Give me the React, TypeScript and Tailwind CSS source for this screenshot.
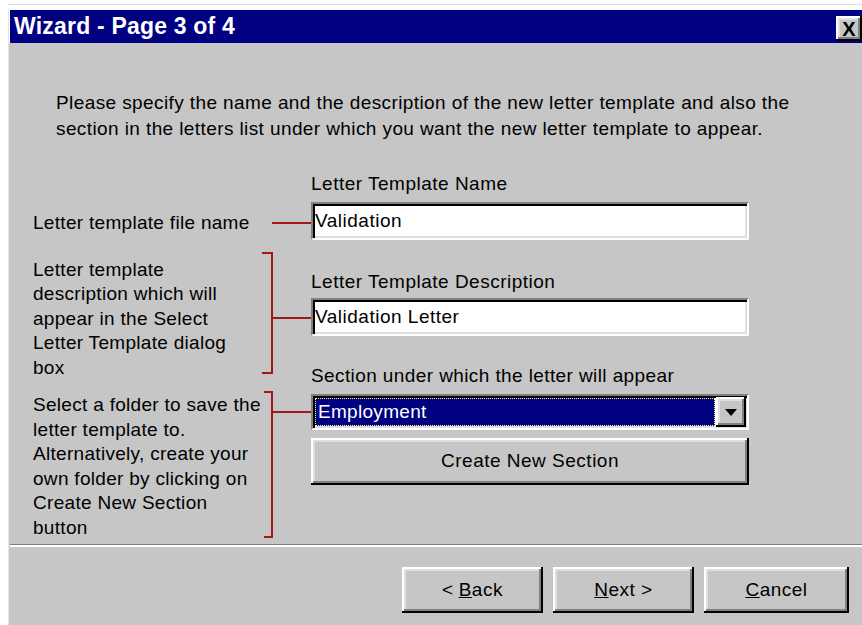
import React from "react";

// Win98-style bevels
const raised =
  "bg-[#c6c6c6] shadow-[inset_-2px_-2px_0_#000,inset_2px_2px_0_#fff,inset_-4px_-4px_0_#808080,inset_4px_4px_0_#dfdfdf]";
const sunken =
  "border-2 border-t-[#808080] border-l-[#808080] border-b-white border-r-white shadow-[inset_2px_2px_0_#000,inset_-2px_-2px_0_#dfdfdf]";

function TextField({ value }: { value: string }) {
  return (
    <div className={`h-[38px] bg-white ${sunken} flex items-center pl-[2px] text-[19px] tracking-[0.5px] text-black`}>
      {value}
    </div>
  );
}

function PushButton({ children, className = "" }: { children: React.ReactNode; className?: string }) {
  return (
    <button className={`${raised} flex items-center justify-center text-[19px] tracking-[0.5px] text-black ${className}`}>
      {children}
    </button>
  );
}

// bracket lines joining the notes on the left to their fields
function Connectors() {
  const red = "#a01818";
  return (
    <svg width="50" height="372" className="shrink-0 overflow-visible" aria-hidden>
      <g stroke={red} strokeWidth="2" fill="none">
        <path d="M11 51 H50" />
        <path d="M1 81 H11 V201 H1" />
        <path d="M11 146 H50" />
        <path d="M3 220 H11 V365 H3" />
        <path d="M11 240 H50" />
      </g>
    </svg>
  );
}

export default function App() {
  return (
    <div className="w-[862px] h-[625px] bg-white overflow-hidden font-['Liberation_Sans',Arial,sans-serif] text-black">
      <div className="ml-[8px] mt-[4px] h-px bg-[#dcdcdc]" />
      <div className="ml-[8px] mt-[4px] h-[616px] border-l border-[#e4e4e4] flex flex-col">
        {/* title bar */}
        <div className="ml-[1px] mt-[1px] h-[33px] bg-[#000080] flex items-center justify-between pl-[4px]">
          <span className="text-white font-bold text-[23px] tracking-[0.2px]">Wizard - Page 3 of 4</span>
          <div className={`${raised} w-[26px] h-[25px] mt-[4px] flex items-center justify-center text-[20px] font-bold leading-none`}>
            X
          </div>
        </div>

        {/* body */}
        <div className="flex-1 bg-[#c6c6c6] flex flex-col">
          <p className="pl-[47px] pt-[47px] text-[19px] leading-[26px] tracking-[0.4px]">
            Please specify the name and the description of the new letter template and also the
            <br />
            section in the letters list under which you want the new letter template to appear.
          </p>

          <div className="mt-[30px] h-[372px] flex pl-[24px]">
            <div className="w-[228px] shrink-0 text-[19px] leading-[24.5px] whitespace-nowrap tracking-[0.3px]">
              <div className="mt-[39px]">Letter template file name</div>
              <div className="mt-[22px]">
                Letter template
                <br />
                description which will
                <br />
                appear in the Select
                <br />
                Letter Template dialog
                <br />
                box
              </div>
              <div className="mt-[13px]">
                Select a folder to save the
                <br />
                letter template to.
                <br />
                Alternatively, create your
                <br />
                own folder by clicking on
                <br />
                Create New Section
                <br />
                button
              </div>
            </div>

            <Connectors />

            <div className="w-[438px] shrink-0 flex flex-col text-[19px]">
              <div className="leading-[24px] tracking-[0.5px]">Letter Template Name</div>
              <div className="mt-[6px]">
                <TextField value="Validation" />
              </div>
              <div className="mt-[30px] leading-[24px] tracking-[0.5px]">Letter Template Description</div>
              <div className="mt-[4px]">
                <TextField value="Validation Letter" />
              </div>
              <div className="mt-[28px] leading-[24px] tracking-[0.4px]">Section under which the letter will appear</div>
              <div className={`mt-[6px] h-[36px] bg-white ${sunken} flex items-center pl-[2px] pr-[1px]`}>
                <div className="flex-1 h-[28px] bg-[#000080] border border-dotted border-[#ffff80] flex items-center pl-[2px] text-white tracking-[0.3px]">
                  Employment
                </div>
                <div className={`${raised} ml-[1px] w-[30px] h-[30px] flex items-center justify-center`}>
                  <svg width="12" height="7" viewBox="0 0 12 7">
                    <path d="M0 0 H12 L6 7 Z" fill="#000" />
                  </svg>
                </div>
              </div>
              <PushButton className="mt-[8px] h-[47px] w-full">Create New Section</PushButton>
            </div>
          </div>

          <div className="ml-[1px] border-t border-[#808080] border-b-2 border-b-white" />

          <div className="mt-[20px] flex justify-end gap-[10px] pr-[13px]">
            <PushButton className="w-[141px] h-[46px]">
              &lt; <span className="underline ml-[5px]">B</span>ack
            </PushButton>
            <PushButton className="w-[141px] h-[46px]">
              <span className="underline">N</span>ext &gt;
            </PushButton>
            <PushButton className="w-[145px] h-[46px]">
              <span className="underline">C</span>ancel
            </PushButton>
          </div>
        </div>
      </div>
    </div>
  );
}
